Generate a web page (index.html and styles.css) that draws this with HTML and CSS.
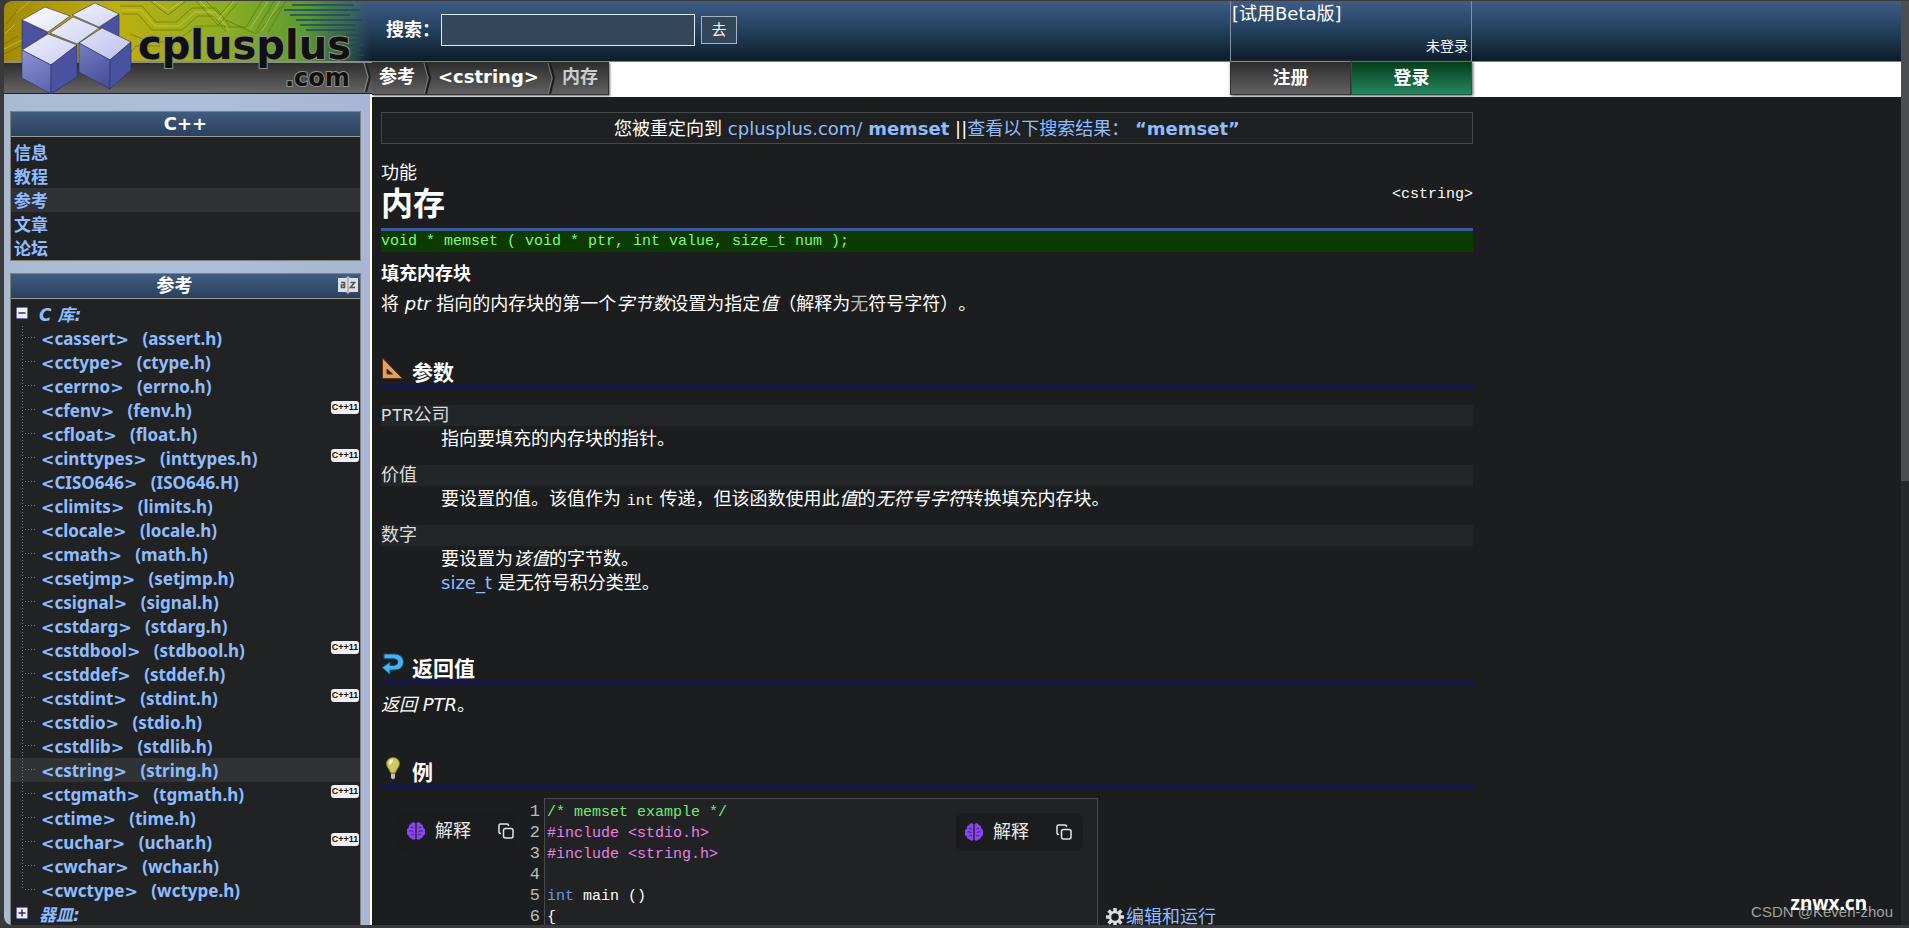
FILE: index.html
```html
<!DOCTYPE html>
<html lang="zh-CN">
<head>
<meta charset="utf-8">
<title>memset - C++ Reference</title>
<link rel="stylesheet" href="styles.css">
</head>
<body>
<svg class="defs" aria-hidden="true">
  <symbol id="brain" viewBox="0 0 20 20">
    <path fill="#8b45f0" d="M9.4 2.2C8.500.8 5.800.9 5.200 3 3.200 3.200 2.500 5 3 6.400 1 7.200.4 9.200 1.200 10.500.4 12 1.200 14 2.800 14.500 3 16.600 4.500 17.600 6 17.400 6.800 19.300 8.800 19.200 9.400 17.800ZM10.600 2.200C11.500.8 14.200.9 14.800 3 16.800 3.200 17.500 5 17 6.400 19 7.200 19.600 9.200 18.800 10.500 19.600 12 18.800 14 17.200 14.500 17 16.600 15.500 17.600 14 17.400 13.200 19.300 11.200 19.200 10.600 17.800Z"/>
    <path fill="none" stroke="#3c1f70" stroke-width="1" d="M5 6.500Q7 5.500 7.500 7.500M3.500 10Q6 9 7.500 11M5 14Q6.500 12.500 8 14M15 6.500Q13 5.500 12.500 7.500M16.500 10Q14 9 12.500 11M15 14Q13.500 12.500 12 14"/>
  </symbol>
  <symbol id="copy" viewBox="0 0 16 16">
    <rect x="5.500" y="5.500" width="9.500" height="9.500" rx="2" fill="none" stroke="#e4e4e4" stroke-width="1.500"/>
    <path fill="none" stroke="#e4e4e4" stroke-width="1.500" d="M3 10.500H2.600Q1 10.500 1 9V2.600Q1 1 2.600 1H9Q10.500 1 10.500 2.600V3"/>
  </symbol>
</svg>
<div class="page">
  <div class="left">
    <a class="logo" href="#" aria-label="cplusplus.com">
      <svg viewBox="4 1 368 93" width="368" height="93">
        <defs>
          <linearGradient id="board" x1="0" x2="1" y1="0" y2="0"><stop offset="0" stop-color="#a38a05"/><stop offset=".3" stop-color="#bfae10"/><stop offset=".6" stop-color="#8dae22"/><stop offset=".82" stop-color="#5a9a34"/><stop offset=".95" stop-color="#3f7a44" stop-opacity=".5"/><stop offset="1" stop-color="#35507a" stop-opacity="0"/></linearGradient>
          <linearGradient id="sky" x1="0" x2="0" y1="0" y2="1"><stop offset="0" stop-color="#3e5c86"/><stop offset="1" stop-color="#0e1d2d"/></linearGradient>
          <linearGradient id="bar" x1="0" x2="0" y1="0" y2="1"><stop offset="0" stop-color="#2e2e2e"/><stop offset="1" stop-color="#666"/></linearGradient>
          <linearGradient id="top" x1="0" x2="1" y1="0" y2="1"><stop offset="0" stop-color="#fff"/><stop offset="1" stop-color="#b9bfee"/></linearGradient>
          <linearGradient id="side" x1="0" x2="1" y1="0" y2="1"><stop offset="0" stop-color="#9298da"/><stop offset="1" stop-color="#3f4692"/></linearGradient>
        </defs>
        <rect x="4" y="1" width="368" height="60" fill="url(#sky)"/>
        <path d="M4 61V8Q4 1 12 1H372V61Z" fill="url(#board)"/>
        <g fill="none" stroke="#5d6a06" stroke-width="1" opacity=".6">
          <path d="M120 6h22l14 16h20l16-14h24l14 18M122 14h16l14 16h30l16-14h16l12 16M124 60l12-14h24M196 1l22 24 20-22M206 1l14 14 12-14M150 1l18 14 18-14M262 1l-16 26h-22M274 1l-18 30M286 1l-18 32M226 20l30 14 26-28M4 44l14-8M4 54l20-10M6 24l12-14M130 34l20 8h26l20-16h30"/>
        </g>
        <g fill="none" stroke="#d8dc50" stroke-width="1" opacity=".55">
          <path d="M121 10h20l14 16h24l16-14h20l14 18M200 1l18 19 16-19M154 1l14 10 14-10M268 1l-18 28M280 1l-18 30M5 34l10-10M4 49l18-9M30 1l-14 12"/>
        </g>
        <g stroke="#1f4960" stroke-width="2" opacity=".75">
          <path d="M292 5h62M284 10h76M290 15h60M296 20h66M300 25h56M306 30h50M346 35h14M348 40h14M350 45h14M350 50h10M350 55h14"/>
        </g>
        <rect x="4" y="61" width="368" height="2" fill="#8c8c8c"/>
        <rect x="4" y="63" width="368" height="30" fill="url(#bar)"/>
        <rect x="4" y="93" width="368" height="1" fill="#222"/>
        <path d="M366 63l4 14-4 15" fill="none" stroke="#222" stroke-width="2"/>
        <path d="M364 63l4 14-4 15" fill="none" stroke="#888" stroke-width="1"/>
        <g stroke="#2c3168" stroke-width=".6" stroke-linejoin="round">
          <path fill="#4b53a0" d="M22 20L48 33 22 50ZM119 14V40L99 28Z"/>
          <path fill="url(#top)" d="M22 20L45 7 70 16 48 32ZM72 15L95 3 119 14 99 27ZM50 33L73 17 99 28 77 44ZM22 50L48 34 77 45 51 65ZM79 43L102 28 131 42 110 60Z"/>
          <path fill="url(#side)" d="M22 50L51 65V94L22 78ZM79 43L110 60V89L79 72Z"/>
          <path fill="#4a529f" d="M51 65L77 45V77L51 94ZM110 60L131 42V70L110 89Z"/>
        </g>
        <g class="wordmark">
          <text x="138" y="59" font-size="40">cplusplus</text>
          <text x="285" y="86" font-size="24">.com</text>
        </g>
      </svg>
    </a>
    <aside class="sidebar">
      <nav class="panel">
        <h2 class="panel-title">C++</h2>
        <ul class="menu">
          <li><a href="#">信息</a></li>
          <li><a href="#">教程</a></li>
          <li class="current"><a href="#">参考</a></li>
          <li><a href="#">文章</a></li>
          <li><a href="#">论坛</a></li>
        </ul>
      </nav>
      <nav class="panel">
        <h2 class="panel-title with-icon">参考
          <svg viewBox="0 0 20 20" width="20" height="20"><path fill="#dde0e4" d="M0 3H7Q9 3 10 1 11 3 13 3H20V17H13Q11 17 10 19 9 17 7 17H0Z"/><path stroke="#8a8f98" d="M10 2V18"/><path fill="none" stroke="#555" stroke-width="1.600" d="M3 7.500H6.500V12.500H3.500V10H6.500M12.500 7.500H16.500L12.500 12.500H17"/></svg>
        </h2>
        <div class="group"><svg viewBox="0 0 12 12" width="12" height="12"><rect x=".5" y=".5" width="11" height="11" rx="1" fill="#eef" stroke="#6a6fc8"/><path stroke="#334" stroke-width="1.500" d="M2.500 6h7"/></svg><a href="#">C 库:</a></div>
        <ul class="tree">
          <li><a href="#"><b>&lt;</b>cassert<b>&gt;</b> <span>(assert.h)</span></a></li>
          <li><a href="#"><b>&lt;</b>cctype<b>&gt;</b> <span>(ctype.h)</span></a></li>
          <li><a href="#"><b>&lt;</b>cerrno<b>&gt;</b> <span>(errno.h)</span></a></li>
          <li><a href="#"><b>&lt;</b>cfenv<b>&gt;</b> <span>(fenv.h)</span></a><i class="badge">C++11</i></li>
          <li><a href="#"><b>&lt;</b>cfloat<b>&gt;</b> <span>(float.h)</span></a></li>
          <li><a href="#"><b>&lt;</b>cinttypes<b>&gt;</b> <span>(inttypes.h)</span></a><i class="badge">C++11</i></li>
          <li><a href="#"><b>&lt;</b>CISO646<b>&gt;</b> <span>(ISO646.H)</span></a></li>
          <li><a href="#"><b>&lt;</b>climits<b>&gt;</b> <span>(limits.h)</span></a></li>
          <li><a href="#"><b>&lt;</b>clocale<b>&gt;</b> <span>(locale.h)</span></a></li>
          <li><a href="#"><b>&lt;</b>cmath<b>&gt;</b> <span>(math.h)</span></a></li>
          <li><a href="#"><b>&lt;</b>csetjmp<b>&gt;</b> <span>(setjmp.h)</span></a></li>
          <li><a href="#"><b>&lt;</b>csignal<b>&gt;</b> <span>(signal.h)</span></a></li>
          <li><a href="#"><b>&lt;</b>cstdarg<b>&gt;</b> <span>(stdarg.h)</span></a></li>
          <li><a href="#"><b>&lt;</b>cstdbool<b>&gt;</b> <span>(stdbool.h)</span></a><i class="badge">C++11</i></li>
          <li><a href="#"><b>&lt;</b>cstddef<b>&gt;</b> <span>(stddef.h)</span></a></li>
          <li><a href="#"><b>&lt;</b>cstdint<b>&gt;</b> <span>(stdint.h)</span></a><i class="badge">C++11</i></li>
          <li><a href="#"><b>&lt;</b>cstdio<b>&gt;</b> <span>(stdio.h)</span></a></li>
          <li><a href="#"><b>&lt;</b>cstdlib<b>&gt;</b> <span>(stdlib.h)</span></a></li>
          <li class="current"><a href="#"><b>&lt;</b>cstring<b>&gt;</b> <span>(string.h)</span></a></li>
          <li><a href="#"><b>&lt;</b>ctgmath<b>&gt;</b> <span>(tgmath.h)</span></a><i class="badge">C++11</i></li>
          <li><a href="#"><b>&lt;</b>ctime<b>&gt;</b> <span>(time.h)</span></a></li>
          <li><a href="#"><b>&lt;</b>cuchar<b>&gt;</b> <span>(uchar.h)</span></a><i class="badge">C++11</i></li>
          <li><a href="#"><b>&lt;</b>cwchar<b>&gt;</b> <span>(wchar.h)</span></a></li>
          <li><a href="#"><b>&lt;</b>cwctype<b>&gt;</b> <span>(wctype.h)</span></a></li>
        </ul>
        <div class="group"><svg viewBox="0 0 12 12" width="12" height="12"><rect x=".5" y=".5" width="11" height="11" rx="1" fill="#eef" stroke="#6a6fc8"/><path stroke="#334" stroke-width="1.500" d="M2.500 6h7M6 2.500v7"/></svg><a href="#">器皿:</a></div>
      </nav>
    </aside>
  </div>
  <div class="right">
    <header class="header">
      <div class="header-inner">
        <div class="header-main">
          <form class="search">
            <label for="q">搜索：</label>
            <input id="q" type="text">
            <button type="button">去</button>
          </form>
          <nav class="crumbs">
            <a href="#">参考</a>
            <svg viewBox="0 0 8 31" width="8" height="31"><path d="M3 0l4 15-4 16" fill="none" stroke="#1c1c1c" stroke-width="2"/><path d="M1 0l4 15-4 16" fill="none" stroke="#777"/></svg>
            <a href="#">&lt;cstring&gt;</a>
            <svg viewBox="0 0 8 31" width="8" height="31"><path d="M3 0l4 15-4 16" fill="none" stroke="#1c1c1c" stroke-width="2"/><path d="M1 0l4 15-4 16" fill="none" stroke="#777"/></svg>
            <span>内存</span>
          </nav>
        </div>
        <div class="user">
          <div class="user-info">
            <a href="#">[试用Beta版]</a>
            <small>未登录</small>
          </div>
          <div class="user-buttons">
            <button type="button">注册</button>
            <button type="button" class="login">登录</button>
          </div>
        </div>
      </div>
    </header>
    <main class="main">
      <article class="content">
        <p class="redirect">您被重定向到 <a href="#">cplusplus.com/ <strong>memset</strong></a> ||<a href="#">查看以下搜索结果： <strong>“memset”</strong></a></p>
        <div class="title">
          <div>
            <p>功能</p>
            <h1>内存</h1>
          </div>
          <code>&lt;cstring&gt;</code>
        </div>
        <pre class="proto">void * memset ( void * ptr, int value, size_t num );</pre>
        <p class="tagline">填充内存块</p>
        <p class="desc">将 <em>ptr</em> 指向的内存块的第一个<em>字节数</em>设置为指定<em>值</em>（解释为<span class="dim">无</span>符号字符）。</p>

        <section class="params">
          <h3><svg viewBox="0 0 23 23" width="23" height="23"><path fill="#e0a060" stroke="#5a3415" fill-rule="evenodd" d="M1.500 1L21.500 21.500H1.500ZM6 12V17H11.500Z"/></svg>参数</h3>
          <dl>
            <dt>PTR公司</dt>
            <dd>指向要填充的内存块的指针。</dd>
            <dt>价值</dt>
            <dd>要设置的值。该值作为 <code>int</code> 传递，但该函数使用此<em>值</em>的<em>无符号字符</em>转换填充内存块。</dd>
            <dt>数字</dt>
            <dd>要设置为<em>该值</em>的字节数。<br><a href="#">size_t</a> 是无符号积分类型。</dd>
          </dl>
        </section>

        <section class="returns">
          <h3><svg viewBox="0 0 23 23" width="23" height="23"><path fill="#45b4f2" stroke="#1c4a7c" d="M3 1H14Q22 1.500 22.500 9 22 16.500 14 17H9V21.500L1 14.500 9 9V12.500H13Q17 12 17 9 17 6 13 5.800H3Z"/></svg>返回值</h3>
          <p><em>返回 PTR</em>。</p>
        </section>

        <section>
          <h3><svg viewBox="0 0 23 23" width="23" height="23"><path fill="#c9c95c" stroke="#6f6f30" d="M12 .5C16 .5 18.500 3.300 18.500 6.800 18.500 10.500 15.500 12 14.500 16H9.500C8.500 12 5.500 10.500 5.500 6.800 5.500 3.300 8 .5 12 .5Z"/><path fill="#f3f3c8" d="M9 3Q11 1.500 12.500 3 11 7 8.500 8 7 5 9 3Z"/><path fill="#bbb" d="M10 16.500H14V21L12 22.500 10 21Z"/></svg>例</h3>
          <div class="example">
            <div class="gutter">
              <div class="tools">
                <button type="button"><svg width="20" height="20"><use href="#brain"/></svg>解释</button>
                <button type="button" aria-label="复制"><svg width="16" height="16"><use href="#copy"/></svg></button>
              </div>
              <pre class="numbers">1
2
3
4
5
6</pre>
            </div>
            <div class="code">
              <pre><span class="comment">/* memset example */</span>
<span class="directive">#include &lt;stdio.h&gt;</span>
<span class="directive">#include &lt;string.h&gt;</span>

<span class="type">int</span> main ()
{</pre>
              <div class="tools floating">
                <button type="button"><svg width="20" height="20"><use href="#brain"/></svg>解释</button>
                <button type="button" aria-label="复制"><svg width="16" height="16"><use href="#copy"/></svg></button>
              </div>
            </div>
            <a class="run" href="#"><svg viewBox="0 0 20 20" width="20" height="20"><g stroke="#ddd" stroke-width="3.500"><path d="M10 1V19M1 10H19M3.600 3.600L16.400 16.400M16.400 3.600L3.600 16.400"/></g><circle cx="10" cy="10" r="5" fill="#1b1d1e" stroke="#ddd" stroke-width="2.500"/></svg>编辑和运行</a>
          </div>
        </section>
      </article>
    </main>
  </div>
  <div class="mark-author">CSDN @Keven-zhou</div>
  <div class="mark-site">znwx.cn</div>
</div>
<div class="scrollbar"><div class="thumb"></div></div>
</body>
</html>
```
FILE: styles.css
```css
* { box-sizing: border-box; }

body {
  margin: 0;
  height: 100vh;
  padding: 1px 0 3px 4px;
  display: flex;
  overflow: hidden;
  background: #3a3a3c;
  color: #fff;
  font: 18px/24px "DejaVu Sans", "Noto Sans CJK SC", sans-serif;
  text-spacing-trim: space-all;
}

h1, h2, h3, p, ul, dl, dd, pre { margin: 0; }
ul { padding: 0; list-style: none; }
a { color: #8fbcff; text-decoration: none; }
button { font: inherit; color: inherit; cursor: pointer; }
pre, code { font-family: "Liberation Mono", "Noto Sans CJK SC", monospace; font-size: 15px; }
code { line-height: 16px; }
.defs { position: absolute; width: 0; height: 0; }

.page {
  position: relative;
  flex: 1;
  min-width: 0;
  display: flex;
  overflow: hidden;
  border-radius: 8px 0 0 8px;
  background: #1b1d1e;
}

/* left column */
.left { flex: none; width: 368px; display: flex; flex-direction: column; }
.logo, .logo svg { display: block; }
.wordmark text {
  font-family: "DejaVu Sans", sans-serif;
  font-weight: bold;
  fill: #111;
  stroke: #8e8e86;
  stroke-width: 2px;
  paint-order: stroke;
}

.sidebar {
  flex: 1;
  padding: 17px 9px 0 6px;
  display: flex;
  flex-direction: column;
  gap: 12px;
  background: linear-gradient(90deg, #a9bbd0, #adbfd8 50%, #a7b6d4);
  border-right: 2px solid #fff;
}
.panel { border: 1px solid #80807c; background: #212223; font-size: 17px; font-weight: bold; }
.panel-title {
  height: 25px;
  text-align: center;
  font-size: 18px;
  line-height: 24px;
  background: linear-gradient(#405c80, #2a415e);
  border-bottom: 1px solid #9a9a94;
}
.with-icon { display: grid; grid-template-columns: 1fr auto; padding-right: 2px; }
.with-icon svg { margin-top: 1px; }

.menu { padding-top: 3px; }
.menu li { height: 24px; padding-left: 3px; line-height: 26px; }
.current { background-color: #2f3336; }

.group { display: flex; gap: 11px; padding-left: 5px; height: 24px; line-height: 26px; font-style: italic; }
.group svg { margin-top: 5px; }
.panel-title + .group { margin-top: 3px; }

.tree li {
  display: flex;
  height: 24px;
  padding: 0 1px 0 30px;
  line-height: 26px;
  background-image:
    repeating-linear-gradient(90deg, #777 0 1px, transparent 1px 3px),
    repeating-linear-gradient(#777 0 1px, transparent 1px 3px);
  background-size: 11px 1px, 1px 24px;
  background-position: 14px 11px, 11px 0;
  background-repeat: no-repeat;
}
.tree li:last-child { background-size: 11px 1px, 1px 12px; }
.tree a { flex: 1; font-family: "Noto Sans", sans-serif; }
.tree b { font-family: "DejaVu Sans", sans-serif; font-size: 16px; }
.tree span { margin-left: 9px; }
.badge {
  margin-top: 3px;
  width: 28px;
  height: 13px;
  border-radius: 3px;
  background: #f0f0f0;
  color: #111;
  text-align: center;
  font: bold 9px/13px "Liberation Sans", sans-serif;
}

/* header */
.right { flex: 1; min-width: 0; display: flex; flex-direction: column; }
.header {
  flex: none;
  height: 96px;
  background: linear-gradient(#3f5c86, #22405c 50%, #0e1b29) 0 0 / 100% 60px no-repeat, linear-gradient(#808080, #808080) 0 60px / 100% 1px no-repeat, #fff;
}
.header-inner { display: flex; justify-content: space-between; max-width: 1100px; }
.search { display: flex; align-items: center; height: 61px; padding: 0 0 4px 14px; }
.search label { width: 55px; font-weight: bold; white-space: nowrap; }
.search input { width: 254px; height: 32px; border: 1px solid #dfe8f0; background: #34465a; color: #fff; font: inherit; }
.search button { width: 36px; height: 28px; margin-left: 6px; padding: 0; border: 1px solid #a4b2c2; background: #34465a; font-size: 15px; }

.crumbs {
  display: flex;
  width: max-content;
  height: 33px;
  padding: 0 10px 0 7px;
  line-height: 28px;
  font-weight: bold;
  background: linear-gradient(#2e2e2e, #606060);
  border: solid #333;
  border-width: 1px 1px 1px 0;
  box-shadow: 1px 1px 2px #666;
}
.crumbs a { color: #fff; }
.crumbs span { color: #ccc; }
.crumbs svg { margin: 0 7px 0 8px; }

.user { width: 242px; }
.user-info {
  height: 60px;
  padding: 1px 3px 3px 1px;
  display: flex;
  flex-direction: column;
  justify-content: space-between;
  border: solid #8092a8;
  border-width: 0 1px;
}
.user-info a { color: #fff; }
.user-info small { text-align: right; font-size: 14px; }
.user-buttons { display: grid; grid-template-columns: 1fr 1fr; box-shadow: 1px 1px 3px #555; }
.user-buttons button {
  height: 34px;
  padding: 0;
  border: 1px solid #333;
  border-top-color: #888;
  background: linear-gradient(#2c2c2c, #626262);
  font-weight: bold;
}
.user-buttons .login { background: linear-gradient(#033d18, #258560); border-color: #3f8468 #1d5a40 #1d5a40; }

/* article */
.main { flex: 1; padding: 15px 9px 0; }
.content { max-width: 1092px; }
.redirect { height: 32px; border: 1px solid #45494c; background: #1e2021; text-align: center; line-height: 31px; }
.title {
  display: flex;
  align-items: center;
  justify-content: space-between;
  margin-top: 16px;
  height: 71px;
  border-bottom: 3px solid #3a5a9c;
}
.title p { margin-bottom: 3px; }
.title h1 { font-size: 32px; line-height: 32px; padding-bottom: 7px; }
.title code { padding-top: 2px; }
.proto { height: 21px; line-height: 22px; background: #0b3b00; color: #80f880; }
.tagline { margin-top: 10px; font-weight: bold; }
.desc { margin-top: 6px; }
.dim { color: #bbb; }

h3 {
  display: flex;
  align-items: flex-start;
  gap: 8px;
  height: 30px;
  font-size: 21px;
  line-height: 32px;
  border-bottom: 2px solid #12127c;
}
.params { margin-top: 41px; }
.returns { margin: 58px 0 40px; }
.returns p { margin-top: 10px; }
dl { padding-top: 18px; }
dt { height: 21px; line-height: 22px; background: #232628; color: #ddd; font-family: "Liberation Mono", "Noto Sans CJK SC", monospace; }
dd { margin: 0 0 14px 60px; padding-top: 1px; }

.example { display: flex; margin-top: 11px; }
.gutter { width: 163px; display: flex; justify-content: space-between; }
.numbers { padding: 3px 4px 0 0; text-align: right; line-height: 21px; color: #bbb; font-size: 17px; }
.tools { display: flex; align-items: center; gap: 27px; height: 38px; padding: 0 11px 0 8px; border-radius: 8px; background: #1b1c1d; }
.tools button { display: flex; align-items: center; gap: 9px; padding: 0; border: 0; background: none; color: #e8e8e8; }
.gutter .tools { margin: 14px 0 0 17px; padding-right: 0; }
.code { position: relative; width: 554px; border: 1px solid #484b4d; background: #212223; }
.code pre { padding: 3px 0 8px 2px; line-height: 21px; }
.floating { position: absolute; top: 14px; right: 14px; }
.comment { color: #78e878; }
.directive { color: #e880e8; }
.type { color: #6a9ae8; }
.run { display: flex; align-self: flex-end; align-items: center; margin: 0 0 8px 7px; gap: 1px; }

/* overlays */
.mark-author { position: absolute; right: 8px; bottom: 1px; color: #a0a0a0; font: 15px/24px "Liberation Sans", sans-serif; }
.mark-site { position: absolute; right: 34px; bottom: 9px; font: bold 19px/26px "Noto Sans", sans-serif; }

.scrollbar { flex: none; width: 8px; background: #242828; }
.thumb { height: 52%; background: #4b4e51; }
```
